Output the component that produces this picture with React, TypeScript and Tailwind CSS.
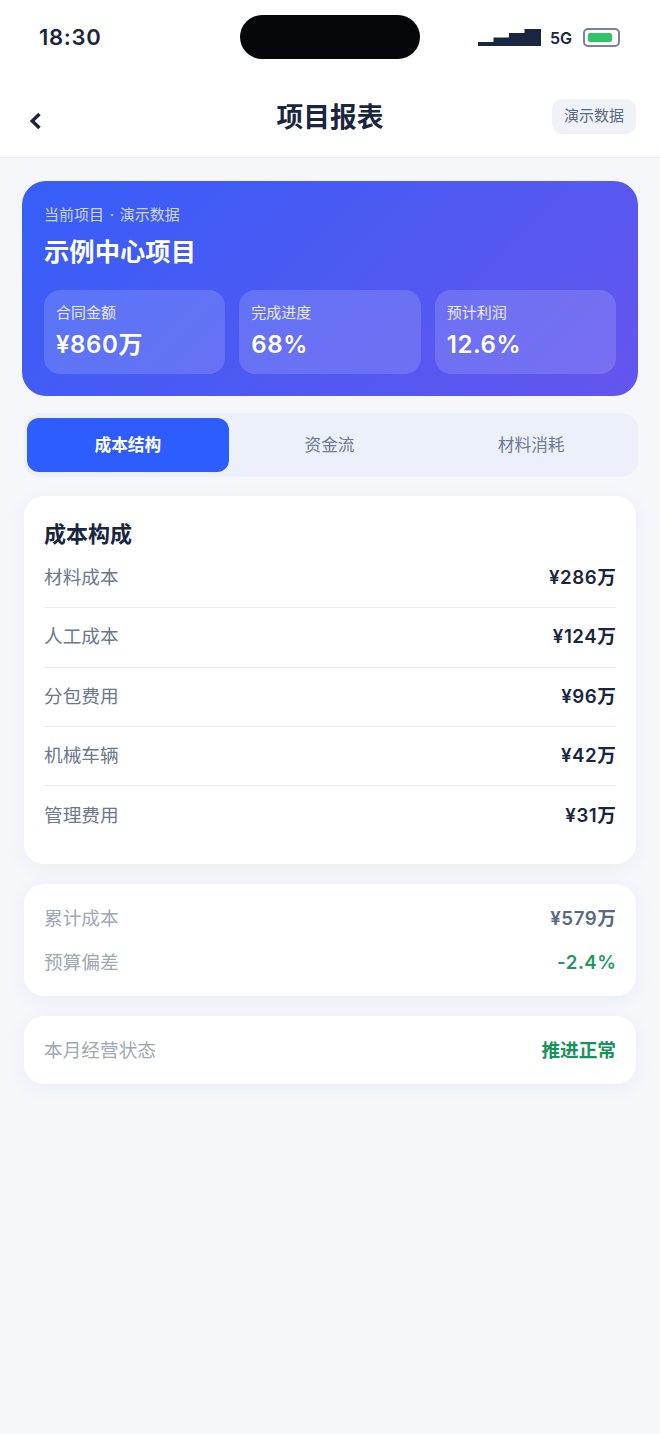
const font = '[font-family:Inter,"Noto_Sans_CJK_SC",sans-serif]';

const stats = [
  ["合同金额", "¥860万"],
  ["完成进度", "68%"],
  ["预计利润", "12.6%"],
];
const costs = [
  ["材料成本", "¥286万"],
  ["人工成本", "¥124万"],
  ["分包费用", "¥96万"],
  ["机械车辆", "¥42万"],
  ["管理费用", "¥31万"],
];

export default function App() {
  return (
    <div className={`${font} w-[660px] h-[1434px] bg-[#f5f7fb] overflow-hidden`}>
      <div className="bg-white h-[158px] border-b border-[#e6ebf3] flex flex-col">
        <div className="h-[78px] pt-[15px] pl-[39px] pr-[39px] flex items-start">
          <div className="w-[201px] h-[44px] flex items-center text-[22px] font-semibold tracking-[0.7px] text-[#1a2640] pt-[1px]">18:30</div>
          <div className="w-[180px] h-[44px] rounded-[22px] bg-[#050608]" />
          <div className="ml-[58px] h-[44px] flex items-center gap-[9px] pt-[1px]">
            <svg width="63" height="17" viewBox="0 0 63 17" className="shrink-0">
              <path d="M0 17V13H15.5V8.5H31V4H46.5V0H63V17Z" fill="#1a2743" />
            </svg>
            <span className="text-[16px] font-semibold text-[#1a2640] leading-none">5G</span>
            <div className="ml-[2px] w-[37px] h-[19px] rounded-[5px] border-2 border-[#7a8298] p-[3px] flex">
              <div className="w-[24px] h-full rounded-[2px] bg-[#2fc465]" />
            </div>
          </div>
        </div>
        <div className="flex-1 pl-[28px] pr-[24px] flex items-center justify-between relative pb-[2px]">
          <svg width="14" height="22" viewBox="0 0 14 22" className="mt-[8px]">
            <path d="M11.5 4L4.2 11L11.5 18" fill="none" stroke="#1a2640" strokeWidth="3.4" />
          </svg>
          <div className="absolute left-0 right-0 top-[25px] text-center text-[26.75px] font-semibold text-[#1a2640] leading-[28px]">项目报表</div>
          <div className="h-[35px] w-[84px] rounded-[10px] bg-[#eff3f7] flex items-center justify-center text-[15px] text-[#5a6880] mb-[1px]">演示数据</div>
        </div>
      </div>

      <div className="px-[22px] pt-[23px]">
        <div className="h-[215px] rounded-[24px] bg-[linear-gradient(135deg,#365ef8,#6455ee)] px-[22px] pt-[24px] text-white">
          <div className="text-[15px] leading-[20px] [word-spacing:1.5px] text-white/75">当前项目 · 演示数据</div>
          <div className="mt-[9px] text-[25.33px] leading-[36px] font-semibold">示例中心项目</div>
          <div className="mt-[20px] grid grid-cols-3 gap-[14px]">
            {stats.map(([k, v]) => (
              <div key={k} className="h-[84px] rounded-[16px] bg-white/15 px-[12px] pt-[13px]">
                <div className="text-[15px] leading-[20px] text-white/85">{k}</div>
                <div className="mt-[6px] text-[24px] leading-[32px] font-semibold tracking-[0.6px]">{v}</div>
              </div>
            ))}
          </div>
        </div>

        <div className="mt-[17px] ml-[2px] w-[614px] h-[64px] rounded-[16px] bg-[#ebf0fa] py-[5px] pl-[3px] pr-[6px] grid grid-cols-3">
          <div className="h-[54px] pt-[1px] rounded-[12px] bg-[#2d5cff] flex items-center justify-center text-[16.67px] font-semibold text-white">成本结构</div>
          <div className="h-[54px] pt-[1px] flex items-center justify-center text-[16.67px] text-[#6f7b90]">资金流</div>
          <div className="h-[54px] pt-[1px] flex items-center justify-center text-[16.67px] text-[#6f7b90]">材料消耗</div>
        </div>

        <div className="mt-[19px] mx-[2px] h-[368px] rounded-[20px] bg-white px-[20px] pt-[22px] shadow-[0_4px_20px_rgba(30,50,90,0.05)]">
          <div className="text-[22px] leading-[32px] font-semibold text-[#1a2640]">成本构成</div>
          {costs.map(([k, v], i) => (
            <div key={k} className={`h-[59.25px] flex items-center justify-between ${i === 0 ? "-mt-[1px]" : ""} ${i < 4 ? "border-b-[1.5px] border-[#e9edf2]" : ""}`}>
              <span className="text-[18.67px] text-[#6c788d]">{k}</span>
              <span className="text-[18.67px] font-semibold tracking-[0.6px] -mr-[0.6px] text-[#1a2640]">{v}</span>
            </div>
          ))}
        </div>

        <div className="mt-[20px] mx-[2px] h-[112px] rounded-[20px] bg-white px-[20px] pt-[19px] shadow-[0_4px_20px_rgba(30,50,90,0.05)]">
          <div className="h-[32px] flex items-center justify-between">
            <span className="text-[18.67px] text-[#a0a7b5]">累计成本</span>
            <span className="text-[18.67px] font-semibold tracking-[0.6px] -mr-[0.6px] text-[#5a6880]">¥579万</span>
          </div>
          <div className="mt-[12px] h-[32px] flex items-center justify-between">
            <span className="text-[18.67px] text-[#a0a7b5]">预算偏差</span>
            <span className="text-[18.67px] font-semibold tracking-[0.5px] -mr-[0.5px] text-[#1f9a5f]">-2.4%</span>
          </div>
        </div>

        <div className="mt-[20px] mx-[2px] h-[68px] pt-[1px] rounded-[20px] bg-white px-[20px] flex items-center justify-between shadow-[0_4px_20px_rgba(30,50,90,0.05)]">
          <span className="text-[18.67px] text-[#a0a7b5]">本月经营状态</span>
          <span className="text-[18.67px] font-semibold text-[#16945a]">推进正常</span>
        </div>
      </div>
    </div>
  );
}
